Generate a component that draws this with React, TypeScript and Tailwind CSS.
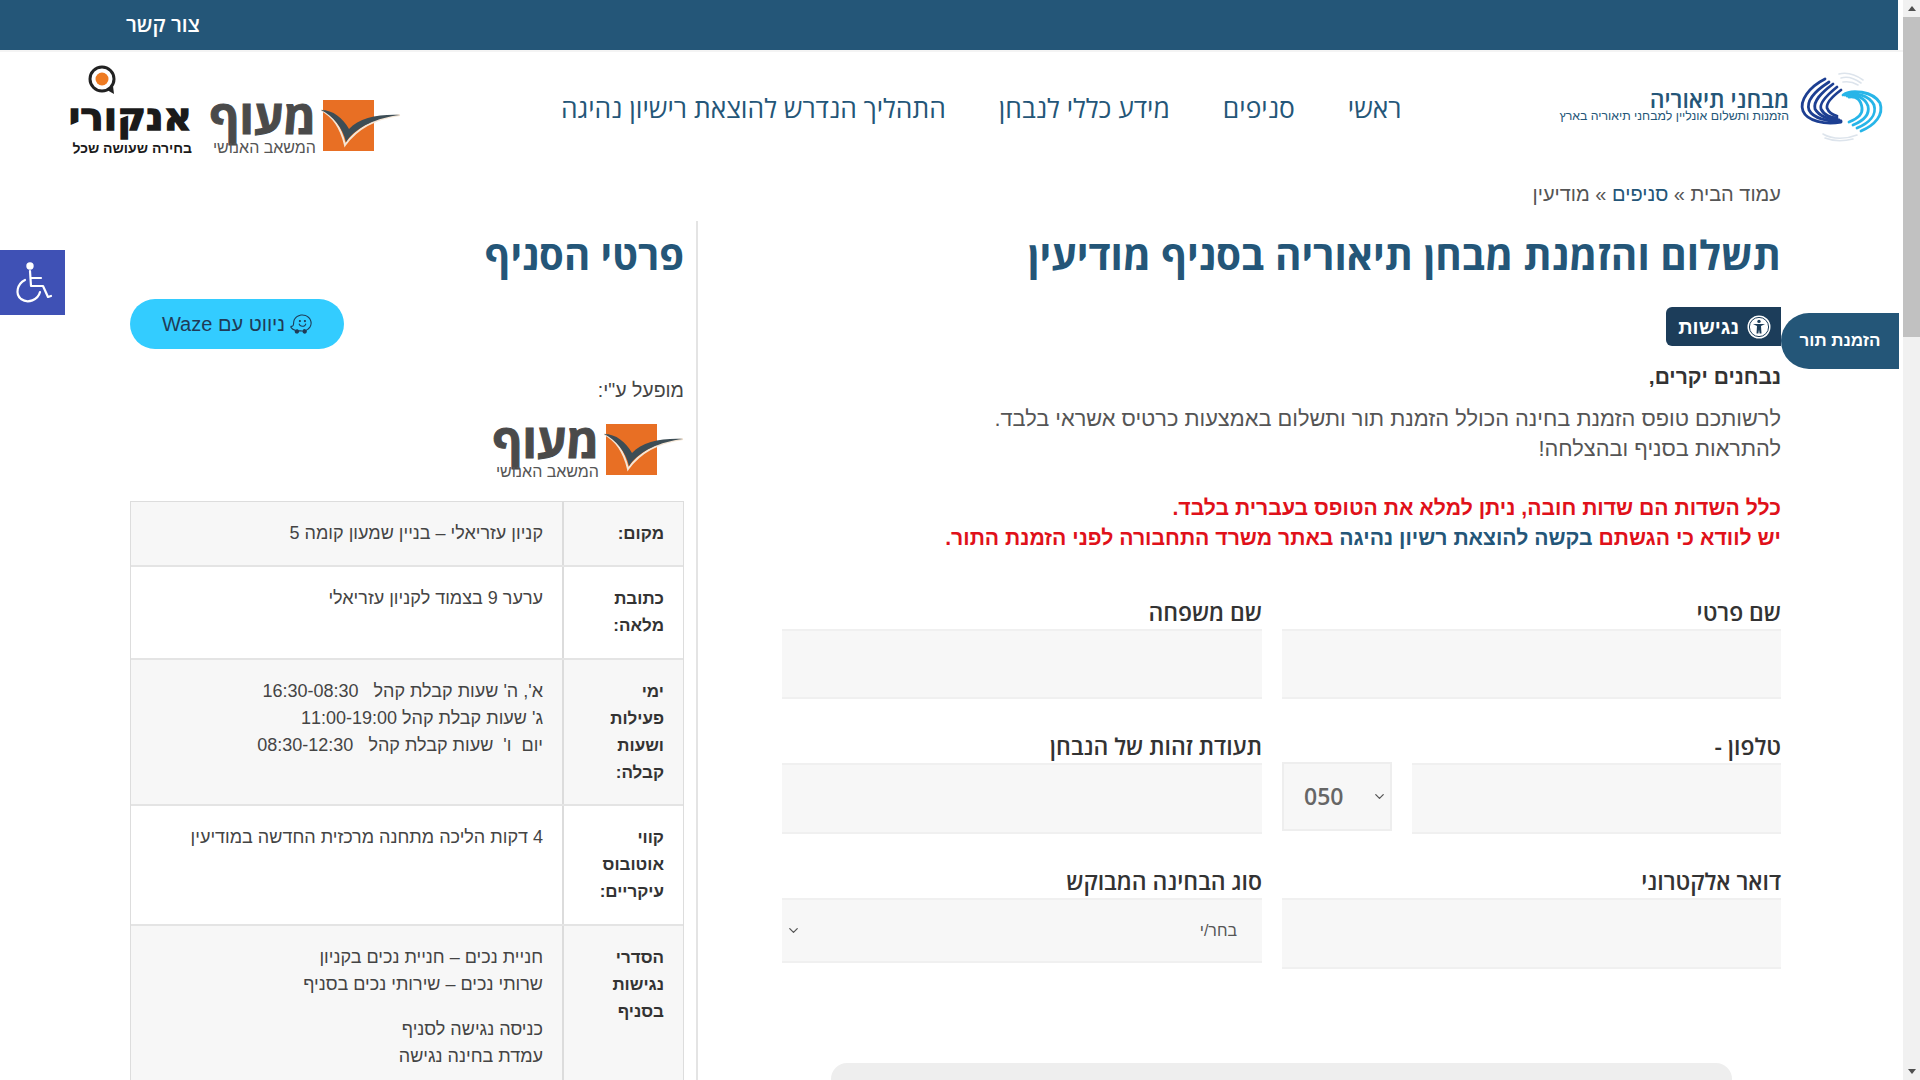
import React from 'react';
import { FaWaze } from 'react-icons/fa';
import { ChevronDown } from 'lucide-react';

const SwirlLogo = () => (
  <svg width="100" height="80" viewBox="0 0 100 80" fill="none" strokeLinecap="round" className="shrink-0">
    <g stroke="#dde4ec" strokeWidth="1.6">
      <path d="M50 9 C58 7 67 10 74 15" />
      <path d="M52 13 C58 11 65 13 72 18" />
      <path d="M54 17 C60 16 64 17 69 20" />
      <path d="M34 69 C44 75 58 74 68 70" />
      <path d="M36 73 C46 77 56 76 64 74" />
    </g>
    <g stroke="#1d3f92" strokeWidth="2.8">
      <path d="M36 14 C20 22 10 36 14 46 C18 56 36 60 52 57" />
      <path d="M40 17 C26 26 17 36 20 45 C24 53 38 57 52 56" />
      <path d="M44 19 C32 28 24 36 26 44 C30 51 40 55 50 55" />
      <path d="M48 22 C38 30 30 38 32 44 C35 50 42 53 48 53" />
      <path d="M52 25 C44 31 37 38 38 43 C40 48 44 50 48 51" />
    </g>
    <g stroke="#27b5e8" strokeWidth="2.8">
      <path d="M54 30 C62 24 84 26 91 38 C95 50 86 60 72 66" />
      <path d="M56 30 C66 27 80 30 85 40 C88 50 80 58 68 63" />
      <path d="M58 31 C68 29 76 33 79 41 C81 50 74 56 64 60" />
      <path d="M60 32 C68 31 72 35 73 43 C74 50 68 54 60 57" />
    </g>
  </svg>
);

const MaofMark = () => (
  <svg width="80" height="52" viewBox="0 0 80 52" fill="none" className="shrink-0 mt-[3px]">
    <rect x="2" y="0" width="51" height="51" fill="#e86f24" />
    <path d="M0 10 C12 16 20 28 24 45 C36 28 56 18 79 15" stroke="#f4e6d6" strokeWidth="2" />
    <path d="M0 10 C12 10 22 18 28 29 C38 18 58 14 79 15 C56 18 36 26 25 42 C22 28 12 16 0 10 Z" fill="#3d4d55" />
  </svg>
);

const MaofLogo = () => (
  <div className="flex items-start gap-[5px]">
    <MaofMark />
    <div className="flex flex-col items-start -mt-[3px] w-[104px]">
      <span className="font-bold text-[#4a4a4a] text-[47px] leading-[44px] [-webkit-text-stroke:1px_#4a4a4a] font-['Open_Sans','Liberation_Sans',sans-serif]">מעוף</span>
      <span className="text-[#555] text-[16px] leading-[16px] mt-[2px] whitespace-nowrap">המשאב האנושי</span>
    </div>
  </div>
);

const AnkoriLogo = () => (
  <div className="flex flex-col w-[124px]">
    <svg width="30" height="30" viewBox="0 0 30 30" fill="none" className="self-end ml-[19px]">
      <circle cx="15" cy="14" r="12" stroke="#222" strokeWidth="3" />
      <circle cx="15" cy="14" r="6.5" fill="#ee7b22" />
      <path d="M20 25 L27 29 L26 21 Z" fill="#222" />
    </svg>
    <span className="font-['DejaVu_Sans',sans-serif] font-bold text-[39px] leading-[40px] mt-[2px] text-[#1a1a1a] whitespace-nowrap [-webkit-text-stroke:1.4px_#1a1a1a]">אנקורי</span>
    <span className="font-bold text-[14px] leading-[16px] mt-[3px] text-[#1a1a1a] whitespace-nowrap">בחירה שעושה שכל</span>
  </div>
);

const WheelchairIcon = () => (
  <svg width="40" height="42" viewBox="0 0 40 42" fill="none" stroke="#fff" strokeWidth="2.2" strokeLinecap="round" strokeLinejoin="round">
    <circle cx="17" cy="4" r="2.6" fill="#fff" />
    <path d="M17 9 L18 24 L30 24 L35 35 L38 34" />
    <path d="M18 16 L28 16" />
    <path d="M12 18 C4 22 2 32 8 37 C15 42 25 38 27 30" />
  </svg>
);

const FigureIcon = () => (
  <svg width="24" height="24" viewBox="0 0 24 24">
    <circle cx="12" cy="12" r="11.5" fill="#fff" />
    <circle cx="12" cy="12" r="9.6" fill="none" stroke="#1c3d5a" strokeWidth="1" />
    <circle cx="12" cy="6.4" r="1.7" fill="#1c3d5a" />
    <path d="M6 9 L18 9 L14 11 L14.5 18.5 L12.6 18.5 L12 14.5 L11.4 18.5 L9.5 18.5 L10 11 Z" fill="#1c3d5a" />
  </svg>
);

const Label = ({ children }: { children: React.ReactNode }) => (
  <label className="block text-[23px] leading-[24px] font-semibold text-[#333] mb-[5px] font-['Open_Sans','Liberation_Sans',sans-serif]">{children}</label>
);

const inputClass = 'block w-full bg-[#f7f7f7] border-y-2 border-[#f0f0f0]';

const rows = [
  { th: 'מקום:', td: ['קניון עזריאלי – בניין שמעון קומה 5'], h: 'h-[65px]', alt: true },
  { th: 'כתובת מלאה:', td: ['ערער 9 בצמוד לקניון עזריאלי'], h: 'h-[93px]', alt: false },
  { th: 'ימי פעילות ושעות קבלה:', td: ['א\', ה\' שעות קבלת קהל\u00a0\u00a0 16:30-08:30', 'ג\' שעות קבלת קהל 11:00-19:00', 'יום\u00a0 ו\'\u00a0 שעות קבלת קהל\u00a0\u00a0 08:30-12:30'], h: 'h-[146px]', alt: true },
  { th: 'קווי אוטובוס עיקריים:', td: ['4 דקות הליכה מתחנה מרכזית החדשה במודיעין'], h: 'h-[120px]', alt: false },
];

const TableRow = ({ th, children, h, alt }: { th: string; children: React.ReactNode; h: string; alt: boolean }) => (
  <div className={`flex border-b-2 border-[#e4e4e4] ${h} ${alt ? 'bg-[#f7f7f7]' : 'bg-white'}`}>
    <div className="w-[121px] shrink-0 border-l-2 border-[#dcdcdc] pr-[19px] pl-[28px] pt-[18px] text-[17px] leading-[27px] font-bold text-[#333]">{th}</div>
    <div className="flex-1 pr-[19px] pt-[18px] text-[18px] leading-[27px] text-[#444]">{children}</div>
  </div>
);

export default function App() {
  return (
    <div dir="ltr" className="flex h-screen w-full overflow-hidden bg-white font-['Liberation_Sans',sans-serif]">
      <div dir="rtl" className="relative flex-1 min-w-0 overflow-hidden">
        {/* top bar */}
        <div className="h-[50px] mr-[5px] bg-[#245678] flex items-center justify-end pl-[126px]">
          <a className="text-white text-[21px] font-semibold font-['Open_Sans',sans-serif]">צור קשר</a>
        </div>

        {/* header */}
        <header className="h-[130px] flex items-center pr-[14px] pl-[68px] pb-[22px] border-t-2 border-[#f4f4f4]">
          <div className="flex items-center shrink-0">
            <SwirlLogo />
            <div className="flex flex-col items-start">
              <span className="text-[#245678] text-[23px] leading-[22px] font-semibold font-['Open_Sans',sans-serif]">מבחני תיאוריה</span>
              <span className="text-[#245678] text-[12.3px] leading-[13px] whitespace-nowrap">הזמנות ותשלום אונליין למבחני תיאוריה בארץ</span>
            </div>
          </div>
          <nav className="flex gap-[53px] text-[26.4px] text-[#245678] mr-[158px] mt-[8px] whitespace-nowrap font-['Open_Sans',sans-serif]">
            <a>ראשי</a>
            <a>סניפים</a>
            <a>מידע כללי לנבחן</a>
            <a>התהליך הנדרש להוצאת רישיון נהיגה</a>
          </nav>
          <div className="mr-auto self-start mt-[13px] flex items-end gap-[20px]">
            <MaofLogo />
            <AnkoriLogo />
          </div>
        </header>

        {/* page body */}
        <div className="flex pr-[122px] pl-[130px]">
          <main className="w-[999px] shrink-0">
            <div className="text-[20px] leading-[24px] text-[#555] mt-[2px]">
              עמוד הבית » <a className="text-[#245678]">סניפים</a> » מודיעין
            </div>
            <h1 className="mt-[25px] text-[40.4px] leading-[48px] font-bold text-[#245678] font-['Open_Sans',sans-serif]">תשלום והזמנת מבחן תיאוריה בסניף מודיעין</h1>
            <button className="flex items-center gap-[8px] mt-[28px] h-[39px] w-[115px] pr-[10px] rounded-l-[6px] bg-[#1c3d5a] text-white text-[20px] font-bold">
              <FigureIcon />
              נגישות
            </button>
            <p className="mt-[17px] text-[21px] leading-[28px] font-bold text-[#333]">נבחנים יקרים,</p>
            <p className="mt-[13px] text-[21.8px] leading-[30px] text-[#555]">
              לרשותכם טופס הזמנת בחינה הכולל הזמנת תור ותשלום באמצעות כרטיס אשראי בלבד.
              <br />
              להתראות בסניף ובהצלחה!
            </p>
            <p className="mt-[29px] text-[21.2px] leading-[30px] font-bold text-[#e0111a]">
              כלל השדות הם שדות חובה, ניתן למלא את הטופס בעברית בלבד.
              <br />
              יש לוודא כי הגשתם <a className="text-[#245678]">בקשה להוצאת רשיון נהיגה</a> באתר משרד התחבורה לפני הזמנת התור.
            </p>

            <form className="mt-[47px] grid grid-cols-[499px_480px] gap-x-[20px]">
              <div>
                <Label>שם פרטי</Label>
                <div className={`${inputClass} h-[70px]`} />
              </div>
              <div>
                <Label>שם משפחה</Label>
                <div className={`${inputClass} h-[70px]`} />
              </div>

              <div className="mt-[35px]">
                <Label>טלפון -</Label>
                <div className="flex gap-[20px]">
                  <div className={`${inputClass} h-[71px] !w-[369px]`} />
                  <div dir="ltr" className="w-[110px] h-[69px] -mt-[1px] bg-[#f7f7f7] border-2 border-[#eeeeee] flex items-center justify-between pl-[20px] pr-[3px] text-[#666] font-semibold text-[23px] font-['Open_Sans',sans-serif]">
                    050
                    <ChevronDown size={15} strokeWidth={2} className="text-[#555]" />
                  </div>
                </div>
              </div>
              <div className="mt-[35px]">
                <Label>תעודת זהות של הנבחן</Label>
                <div className={`${inputClass} h-[71px]`} />
              </div>

              <div className="mt-[35px]">
                <Label>דואר אלקטרוני</Label>
                <div className={`${inputClass} h-[71px]`} />
              </div>
              <div className="mt-[35px]">
                <Label>סוג הבחינה המבוקש</Label>
                <div className={`${inputClass} h-[65px] flex items-center justify-between pr-[25px] pl-[4px] text-[16px] text-[#555]`}>
                  בחר/י
                  <ChevronDown size={15} strokeWidth={2} className="text-[#555]" />
                </div>
              </div>
            </form>

            <div className="mx-[49px] mt-[94px] h-[40px] rounded-t-[16px] bg-[#eeeeee]" />
          </main>

          {/* sidebar */}
          <aside className="mt-[41px] mr-[84px] w-[568px] shrink-0 border-r-2 border-[#e4e4e4] pr-[12px] pt-[12px]">
            <h2 className="text-[40px] leading-[44px] font-bold text-[#245678] font-['Open_Sans',sans-serif]">פרטי הסניף</h2>
            <div className="flex justify-end">
              <a className="mt-[22px] w-[214px] h-[50px] rounded-full bg-[#33ccff] flex items-center justify-center gap-[5px] text-[20px] text-[#1f3b57]">
                <FaWaze size={22} />
                ניווט עם Waze
              </a>
            </div>
            <p className="mt-[29px] text-[19.5px] leading-[24px] text-[#444]">מופעל ע"י:</p>
            <div className="mt-[19px] flex">
              <MaofLogo />
            </div>
            <div className="mt-[21px] w-[554px] border border-[#dddddd]">
              {rows.map((r) => (
                <TableRow key={r.th} th={r.th} h={r.h} alt={r.alt}>
                  {r.td.map((line) => (
                    <div key={line}>{line}</div>
                  ))}
                </TableRow>
              ))}
              <TableRow th="הסדרי נגישות בסניף" h="h-[220px]" alt={true}>
                <div>חניית נכים – חניית נכים בקניון</div>
                <div>שרותי נכים – שירותי נכים בסניף</div>
                <div className="mt-[18px]">כניסה נגישה לסניף</div>
                <div>עמדת בחינה נגישה</div>
              </TableRow>
            </div>
          </aside>
        </div>

        {/* floating booking tab */}
        <a className="absolute top-[313px] right-[4px] w-[118px] h-[56px] rounded-l-[28px] bg-[#245678] text-white text-[17px] font-bold flex items-center justify-center">הזמנת תור</a>
        {/* accessibility toolbar toggle */}
        <div className="absolute top-[250px] left-0 w-[65px] h-[65px] bg-[#3f51b5] flex items-center justify-center">
          <WheelchairIcon />
        </div>
      </div>

      {/* scrollbar */}
      <div className="w-[17px] shrink-0 bg-[#f1f1f1] flex flex-col items-center">
        <div className="h-[17px] flex items-center justify-center">
          <div className="w-0 h-0 border-x-[4px] border-x-transparent border-b-[5px] border-b-[#505050]" />
        </div>
        <div className="w-full h-[320px] bg-[#c1c1c1]" />
        <div className="mt-auto h-[17px] flex items-center justify-center">
          <div className="w-0 h-0 border-x-[4px] border-x-transparent border-t-[5px] border-t-[#505050]" />
        </div>
      </div>
    </div>
  );
}
